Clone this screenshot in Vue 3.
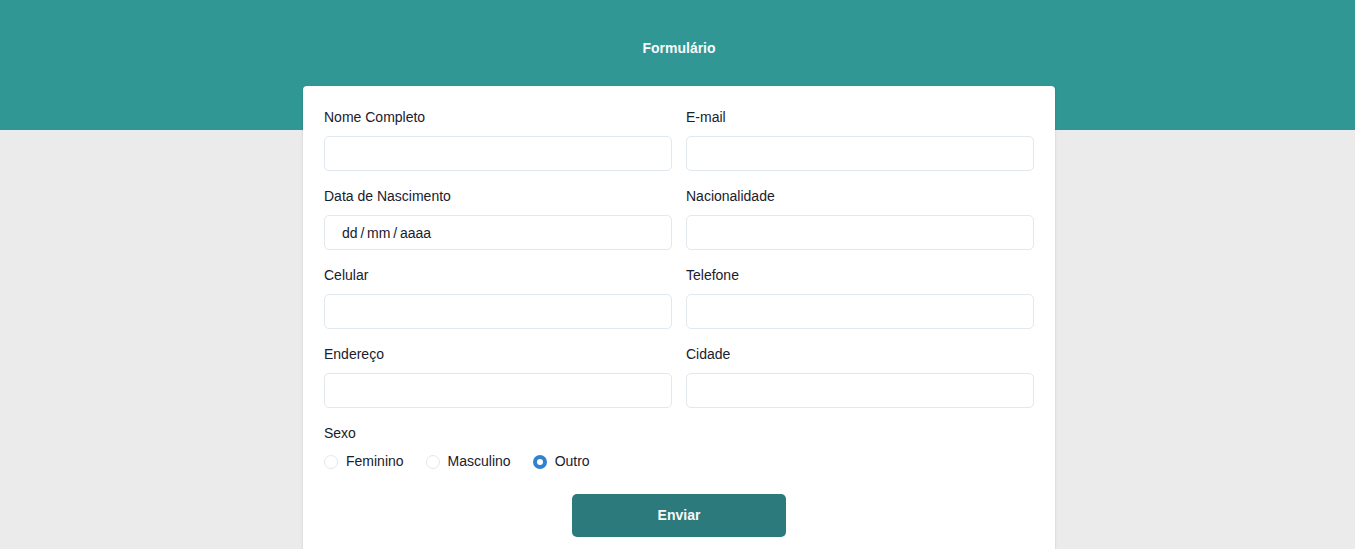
<script setup>
import { ref } from 'vue'

const fields = [
  { id: 'name', label: 'Nome Completo', type: 'text' },
  { id: 'email', label: 'E-mail', type: 'email' },
  { id: 'birth', label: 'Data de Nascimento', type: 'text', placeholder: 'dd\u2009/\u2009mm\u2009/\u2009aaaa' },
  { id: 'nationality', label: 'Nacionalidade', type: 'text' },
  { id: 'mobile', label: 'Celular', type: 'tel' },
  { id: 'phone', label: 'Telefone', type: 'tel' },
  { id: 'address', label: 'Endereço', type: 'text' },
  { id: 'city', label: 'Cidade', type: 'text' },
]
const options = ['Feminino', 'Masculino', 'Outro']
const gender = ref('Outro')
</script>

<template>
  <div class="page">
    <header class="banner">
      <h1 class="title">Formulário</h1>
    </header>
    <main class="content">
      <form class="card" @submit.prevent>
        <div class="grid">
          <div v-for="f in fields" :key="f.id" class="field">
            <label :for="f.id" class="label">{{ f.label }}</label>
            <input :id="f.id" class="input" :type="f.type" :placeholder="f.placeholder" />
          </div>
        </div>
        <fieldset class="group">
          <legend class="label">Sexo</legend>
          <div class="options">
            <label v-for="o in options" :key="o" class="option">
              <input v-model="gender" class="radio" type="radio" name="gender" :value="o" />
              {{ o }}
            </label>
          </div>
        </fieldset>
        <button class="submit" type="submit">Enviar</button>
      </form>
    </main>
  </div>
</template>

<style>
body {
  background: #ebebeb;
}
</style>

<style scoped>
.page {
  min-height: 100vh;
  font-family: "Liberation Sans", Arial, sans-serif;
  font-size: 14px;
  line-height: 21px;
  color: #1a202c;
}
.page *,
.page {
  box-sizing: border-box;
}
.banner {
  height: 130px;
  padding: 38px 0 0 3px;
  background: #319795;
  text-align: center;
}
.title {
  margin: 0;
  font-size: 14px;
  line-height: 21px;
  font-weight: 700;
  color: #f7fafc;
}
.content {
  margin-top: -44px;
  padding-left: 3px;
}
.card {
  position: relative;
  display: flex;
  flex-direction: column;
  max-width: 752px;
  margin: 0 auto;
  padding: 21px;
  border-radius: 4px;
  background: #fff;
  box-shadow: 0 1px 3px rgba(0, 0, 0, 0.1), 0 1px 2px rgba(0, 0, 0, 0.06);
}
.grid {
  display: grid;
  grid-template-columns: 1fr 1fr;
  gap: 15px 14px;
}
.field {
  display: flex;
  flex-direction: column;
}
.label {
  display: block;
  margin-bottom: 8px;
  padding: 0;
}
.input {
  width: 100%;
  height: 35px;
  padding: 0 17px;
  border: 1px solid #e2e8f0;
  border-radius: 5px;
  background: #fff;
  font: inherit;
  color: inherit;
}
.input::placeholder {
  color: #1a202c;
  opacity: 1;
}
.group {
  min-width: 0;
  margin: 15px 0 0;
  padding: 0;
  border: 0;
}
.group .label {
  margin-bottom: 7px;
}
.options {
  display: flex;
  gap: 22px;
}
.option {
  display: flex;
  align-items: center;
  gap: 8px;
}
.radio {
  appearance: none;
  width: 14px;
  height: 14px;
  margin: 0;
  border: 1px solid #e2e8f0;
  border-radius: 50%;
  background: #fff;
}
.radio:checked {
  border: 4px solid #3182ce;
}
.submit {
  align-self: center;
  width: 214px;
  height: 43px;
  margin-top: 22px;
  border: 0;
  border-radius: 5px;
  background: #2c7a7b;
  font: inherit;
  font-weight: 700;
  color: #f7fafc;
}
</style>
